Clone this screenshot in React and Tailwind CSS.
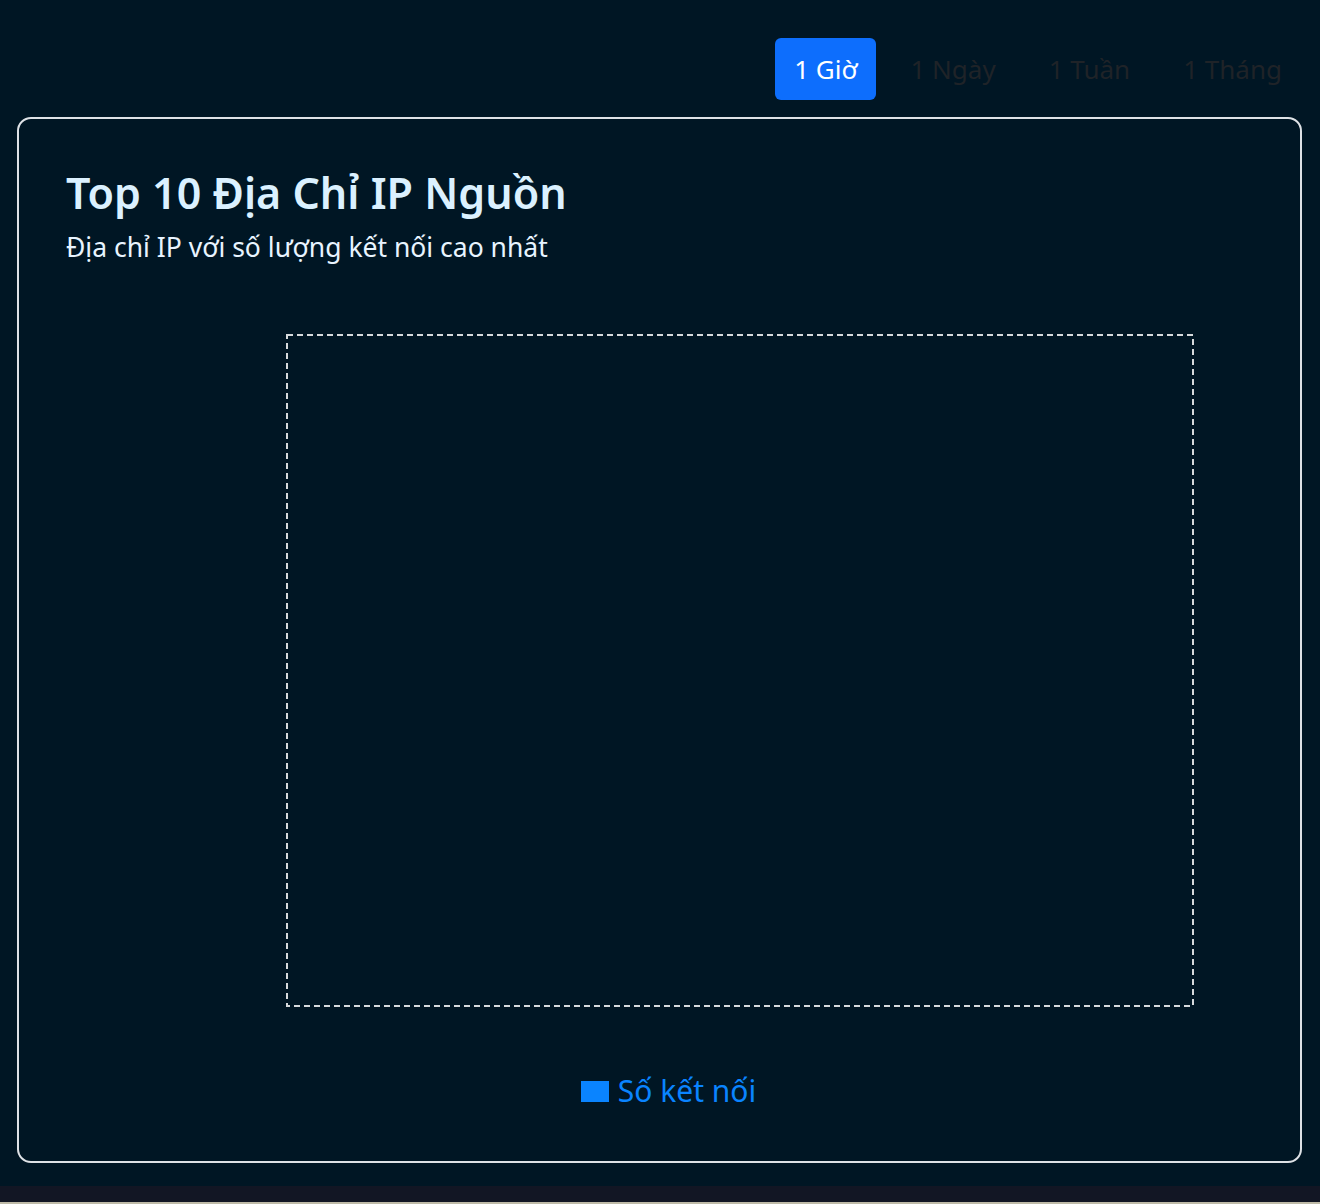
import React from "react";

const ranges = ["1 Giờ", "1 Ngày", "1 Tuần", "1 Tháng"];

function RangeTabs({ active }) {
  return (
    <div className="flex justify-end gap-[15px] pr-[19px] pt-[38px]">
      {ranges.map((r) => (
        <button
          key={r}
          type="button"
          className={`h-[62px] rounded-[6px] px-[19px] text-[26px] leading-none ${
            r === active ? "bg-[#0d6efd] text-white" : "text-[#1f2328]"
          }`}
        >
          {r}
        </button>
      ))}
    </div>
  );
}

function PlotArea() {
  // empty chart plot frame
  return (
    <div className="ml-[220px] mr-[59px] mt-[70px] h-[673px]">
      <svg width="100%" height="100%">
        <rect
          x="1"
          y="1"
          width="calc(100% - 2px)"
          height="calc(100% - 2px)"
          fill="none"
          stroke="#d6dadd"
          strokeWidth="2"
          strokeDasharray="6 4"
        />
      </svg>
    </div>
  );
}

function ChartCard() {
  return (
    <div className="ml-[17px] mr-[18px] mt-[17px] h-[1046px] rounded-[14px] border-2 border-[#dee2e6] px-[47px] pt-[48px]">
      <h2 className="text-[43px] font-semibold leading-[1.2] text-[#dbf1ff]">
        Top 10 Địa Chỉ IP Nguồn
      </h2>
      <p className="mt-[11px] text-[26.5px] leading-[1.3] text-[#e8f4ff]">
        Địa chỉ IP với số lượng kết nối cao nhất
      </p>

      <PlotArea />

      <div className="mt-[69px] flex items-center justify-center gap-[9px] pl-[18px]">
        <span className="h-[21px] w-[28px] bg-[#0a84ff]" />
        <span className="text-[30px] leading-none text-[#0a84ff]">Số kết nối</span>
      </div>
    </div>
  );
}

export default function App() {
  return (
    <div
      className="min-h-[1204px] bg-[#001624]"
      style={{ fontFamily: '"Noto Sans", "Open Sans", sans-serif' }}
    >
      <RangeTabs active="1 Giờ" />
      <ChartCard />
      <div className="mt-[23px] h-[16px] bg-[#121624]" />
      <div className="h-[2px] bg-[#bfbba8]" />
    </div>
  );
}
